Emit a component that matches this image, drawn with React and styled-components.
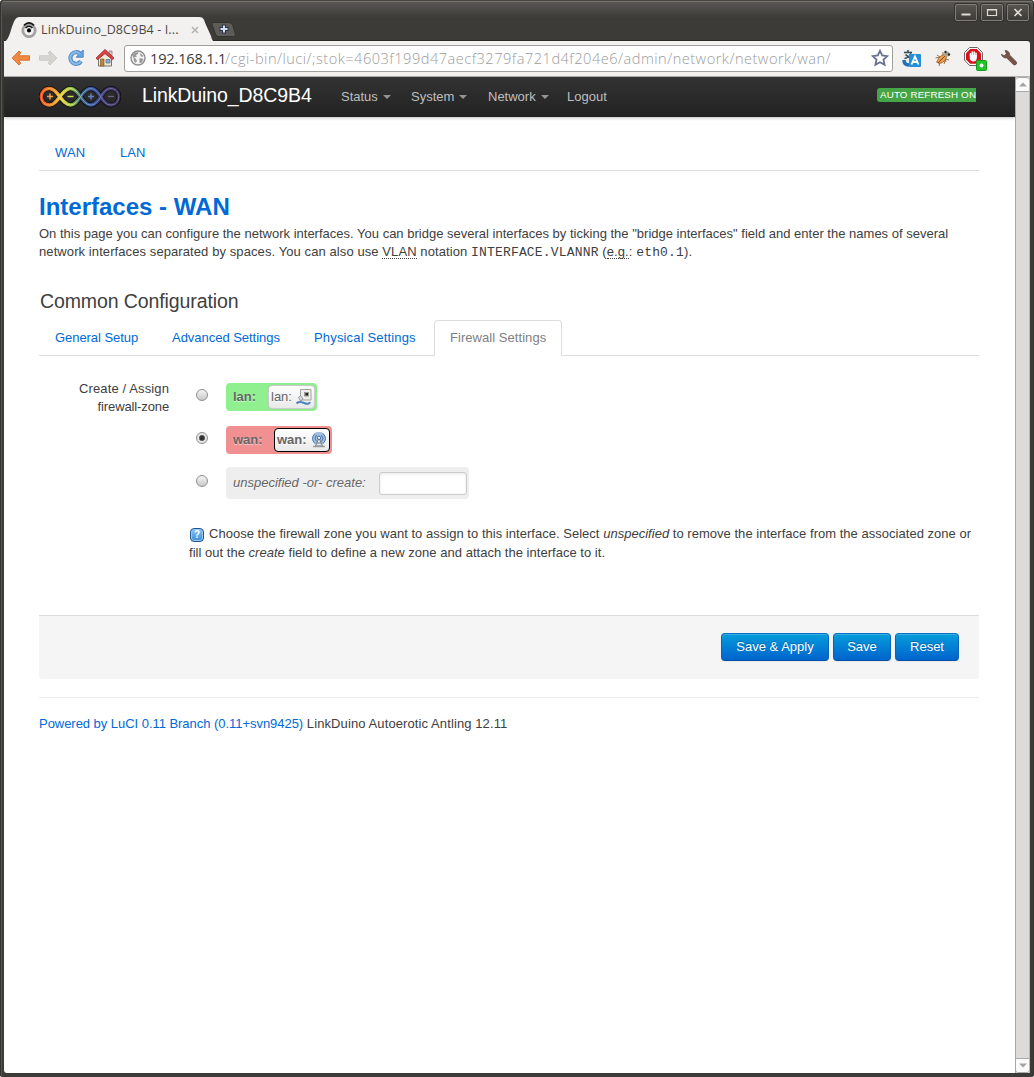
import React from "react";
import styled, { createGlobalStyle, css } from "styled-components";

const Global = createGlobalStyle`
  * { box-sizing: border-box; }
  html, body { margin: 0; padding: 0; background: #fff; }
  body { overflow: hidden; font: 13px/18px "Liberation Sans", Arial, sans-serif; color: #404040; }
  svg { display: block; flex: none; }
`;

const Window = styled.div`
  width: 1034px; height: 1077px; padding: 0 4px 4px;
  display: flex; flex-direction: column;
  background: linear-gradient(#5c5a56 0, #3c3b37 18px, #3c3b37 100%);
  border-radius: 4px 4px 3px 3px;
  box-shadow: inset 1px 0 #34332f, inset 2px 0 #56554f, inset -1px 0 #34332f, inset 0 1px #45443f, inset 0 2px #77756e;
`;
const TitleBar = styled.div`
  height: 41px; flex: none; display: flex; justify-content: space-between;
  border-bottom: 1px solid #2b2a27;
`;
const TabStrip = styled.div`display: flex; padding-top: 17px;`;
const BrowserTab = styled.div`
  width: 207px; height: 24px; display: grid; position: relative; z-index: 1;
  > * { grid-area: 1 / 1; }
`;
const TabInner = styled.div`
  display: flex; align-items: center; height: 25px; padding-left: 17px; z-index: 1;
`;
const TabTitle = styled.span`
  width: 154px; flex: none; padding-left: 4px; white-space: nowrap;
  font: 12.5px/24px "Open Sans", "Noto Sans", sans-serif; letter-spacing: 0.12px; color: #4b4a46;
`;
const WindowButtons = styled.div`display: flex; gap: 4px; padding: 4px 1px 0 0;`;
const WindowButton = styled.div`
  width: 22px; height: 17px; border: 1px solid #807e77; border-radius: 2px;
  background: linear-gradient(#56544f, #3d3c38); box-shadow: 0 0 0 1px #33322e;
  display: grid; place-items: center;
`;
const Toolbar = styled.div`
  height: 36px; flex: none; display: flex; align-items: center; padding: 0 0 1px 7px;
  background: #f2f1f0; border-bottom: 1px solid #b5b3b0; border-radius: 0 3px 0 0;
`;
const Tool = styled.div`width: ${p => p.$w}px; display: flex; justify-content: flex-start;`;
const Address = styled.div`
  width: 769px; height: 27px; margin-right: 9px; padding: 0 3px 0 5px;
  display: flex; align-items: center;
  border: 1px solid #a09f9c; border-radius: 3px; background: #fff;
  font: 14.6px/24px "Open Sans", "Noto Sans", sans-serif; color: #3c3c3c; white-space: nowrap;
`;
const UrlHost = styled.span`width: 75px; margin-left: 4px; letter-spacing: -0.18px;`;
const UrlPath = styled.span`flex: 1; color: #9b9b9b; font-weight: 300; letter-spacing: 0.49px;`;

const Viewport = styled.div`flex: 1; display: flex; background: #fff; min-height: 0; border-radius: 0 0 3px 3px;`;
const Page = styled.div`width: 1011px; display: flex; flex-direction: column;`;
const Scrollbar = styled.div`
  width: 15px; background: #dcdbda; border-left: 1px solid #aaa9a7; border-right: 1px solid #b8b7b5;
  display: flex; flex-direction: column; justify-content: space-between;
`;
const ScrollButton = styled.div`
  height: 15px; background: #fafafa; border: solid #aaa9a7; border-width: 1px 0;
  display: grid; place-items: center;
  border-radius: ${p => (p.$up ? "3px 3px 0 0" : "0 0 3px 3px")};
`;

const TopBar = styled.div`
  height: 40px; flex: none; display: flex; padding: 0 39px 0 35px;
  background: linear-gradient(#333, #222);
  box-shadow: 0 1px 3px rgba(0,0,0,.25), inset 0 -1px 0 rgba(0,0,0,.1);
`;
const Brand = styled.div`
  width: 220px; padding-left: 21px; font-size: 19.5px; line-height: 36px; color: #fff; letter-spacing: -0.1px;
`;
const Menu = styled.div`display: flex; flex: 1;`;
const MenuItem = styled.div`
  width: ${p => p.$w}px; display: flex; gap: 5px; align-items: center; line-height: 40px; color: #bfbfbf;
`;
const Caret = styled.i`
  width: 0; height: 0; border: 4px solid transparent; border-top-color: #949494; border-bottom: 0; margin-top: 0;
`;
const RefreshLabel = styled.span`
  width: 99px; height: 14px; margin-top: 11px; padding-left: 3px; overflow: hidden; white-space: nowrap;
  background: #46a546; border-radius: 3px 0 0 3px; color: #fff; font-size: 9.75px; line-height: 14px; letter-spacing: 0.17px;
`;

const Content = styled.div`width: 940px; margin-left: 35px; display: flex; flex-direction: column;`;
const Tabs = styled.div`
  display: flex; gap: 2px; height: 36px; margin-top: ${p => p.$top || 0}px; border-bottom: 1px solid #ddd;
`;
const Tab = styled.div`
  width: ${p => p.$w}px; height: 36px; padding-left: 15px; line-height: 34px; white-space: nowrap;
  border: 1px solid transparent; color: #0069d6; letter-spacing: ${p => p.$ls || 0}px;
  ${p => p.$active && css`
    color: #808080; background: #fff; border-color: #ddd #ddd #fff; border-radius: 4px 4px 0 0;
  `}
`;
const Heading = styled.h2`margin: 18px 0 0; font-size: 24px; line-height: 36px; color: #0069d6; letter-spacing: 0;`;
const Intro = styled.p`margin: 0; white-space: nowrap;`;
const Line = styled.span`display: block; letter-spacing: ${p => p.$ls}px;`;
const Abbr = styled.span`border-bottom: 1px dotted #404040; display: inline-block; height: 16px; line-height: 18px; vertical-align: top;`;
const Code = styled.code`font-family: "Liberation Mono", monospace; font-size: 13px; line-height: 1; letter-spacing: 0.17px;`;
const Legend = styled.h3`margin: 22px 0 0 1px; font-weight: 400; font-size: 19.5px; line-height: 36px; height: 37px; letter-spacing: -0.1px;`;

const FieldRow = styled.div`display: flex; margin-top: 24px;`;
const FieldLabel = styled.div`width: 130px; margin-right: 20px; display: flex; flex-direction: column; align-items: flex-end;`;
const FieldBody = styled.div`display: flex; flex-direction: column; flex: 1; padding-top: 3px;`;
const Option = styled.div`
  display: flex; align-items: flex-start; height: ${p => p.$h}px; margin-bottom: ${p => p.$gap}px;
`;
const Radio = styled.span`
  width: 12px; height: 12px; margin: ${p => p.$top}px 18px 0 7px; border: 1px solid #8f8f8f; border-radius: 50%;
  background: ${p => p.$checked
    ? "radial-gradient(circle, #333 0 2px, #777 2.8px, #e6e6e6 3.5px)"
    : "linear-gradient(#f4f4f4, #c9c9c9)"};
`;
const Zone = styled.div`
  width: ${p => p.$w}px; height: 100%; padding: 0 2px 0 7px; border-radius: 4px; background: ${p => p.$bg};
  display: flex; align-items: center; justify-content: space-between;
  color: #666; text-shadow: 0 1px 1px rgba(255,255,255,.6);
  font-weight: ${p => (p.$italic ? 400 : 700)}; font-style: ${p => (p.$italic ? "italic" : "normal")};
`;
const IfaceBadge = styled.span`
  width: ${p => p.$w}px; height: 24px; padding: 0 2px; border-radius: 4px; display: flex; align-items: center;
  justify-content: space-between; border: 1px solid ${p => (p.$active ? "#000" : "#ccc")};
  background: linear-gradient(#fff, #e9e9e9); font-weight: ${p => (p.$active ? 700 : 400)};
  box-shadow: ${p => (p.$active ? "none" : "0 0 1px #aaa")};
`;
const ZoneInput = styled.input`
  width: 88px; height: 23px; border: 1px solid #ccc; border-radius: 3px; padding: 0; background: #fff;
  margin-top: 1px; box-shadow: inset 0 1px 3px rgba(0,0,0,.1);
`;
const Help = styled.div`margin-top: 26px; white-space: nowrap;`;
const HelpLine = styled.div`display: flex; align-items: center; height: ${p => p.$h}px; letter-spacing: ${p => p.$ls}px;`;
const HelpBadge = styled.span`
  display: grid; place-items: center; width: 14px; height: 14px; margin: 1px 5px 0 1px; flex: none;
  border: 1px solid #205691; border-radius: 4px;
  background: linear-gradient(#8ac0f1, #3e8edb); box-shadow: inset 0 0 0 1px #9bcaf0;
  color: #fff; font-size: 10px; font-weight: 700; line-height: 12px;
`;

const Actions = styled.div`
  height: 64px; margin-top: 53px; padding: 17px 20px 0; display: flex; justify-content: flex-end; gap: 4px;
  background: #f5f5f5; border-top: 1px solid #ddd; border-radius: 0 0 3px 3px;
`;
const Button = styled.button`
  width: ${p => p.$w}px; height: 28px; padding: 0 0 1px; border: 1px solid; border-color: #0a6fc4 #0a63b8 #0050a8;
  border-radius: 4px; background: linear-gradient(#049cdb, #0064cd); color: #fff;
  font: 13px/18px "Liberation Sans", Arial, sans-serif; text-shadow: 0 -1px 0 rgba(0,0,0,.25);
  box-shadow: inset 0 1px 0 rgba(255,255,255,.2), 0 1px 2px rgba(0,0,0,.05);
`;
const Footer = styled.div`margin-top: 18px; padding-top: 17px; border-top: 1px solid #eee; letter-spacing: 0.1px;`;
const FootLink = styled.span`color: #0069d6; letter-spacing: -0.04px;`;

const TabShape = () => (
  <svg width="212" height="25" viewBox="0 0 212 25">
    <path d="M0 25C4 23 5 19 7 13C10 4 11 0 16 0H195C200 0 200 3 202 8L207 19C208 23 209 25 212 25Z" fill="#f2f1f0" />
  </svg>
);
const Favicon = () => (
  <svg width="16" height="16" viewBox="0 0 16 16">
    <circle cx="8" cy="8.5" r="6.2" fill="#f2f2f2" stroke="#a2a2a2" strokeWidth="2.8" />
    <path d="M3 3.4Q8-1.600 13 3.4M4.6 6Q8 2.500 11.4 6" fill="none" stroke="#151515" strokeWidth="1.7" />
    <circle cx="8" cy="8.4" r="2.1" fill="#000" />
  </svg>
);
const CloseTab = () => (
  <svg width="8" height="8" viewBox="0 0 8 8"><path d="M1 1L7 7M7 1L1 7" stroke="#b5b3b0" strokeWidth="1.5" /></svg>
);
const NewTab = () => (
  <svg width="26" height="24" viewBox="0 0 26 24">
    <path d="M2 5.5H18Q21 5.5 22 9L24.5 17.5Q25 19.5 22.5 19.5H7Q5 19.5 4 16L1 7Q.6 5.5 2 5.5Z" fill="#5d5c58" stroke="#33322f" />
    <path d="M13 7.500V16.500M8.500 12H17.500" stroke="#26364f" strokeWidth="4" />
    <path d="M13 8.500V15.500M9.500 12H16.500" stroke="#d5e0f2" strokeWidth="2" />
  </svg>
);
const Arrow = ({ fill, stroke, flip }) => (
  <svg width="20" height="16" viewBox="0 0 20 16">
    <path transform={flip ? "translate(20 0) scale(-1 1)" : undefined}
      d="M1.2 8L8 1L9.8 2.8L7.4 5.800H18.5V10.200H7.4L9.8 13.200L8 15Z" fill={fill} stroke={stroke} strokeLinejoin="round" />
  </svg>
);
const Reload = () => (
  <svg width="18" height="18" viewBox="0 0 18 18">
    <path d="M13.2 4.8A5.8 5.8 0 1 0 14 12.3" fill="none" stroke="#4d86c7" strokeWidth="4.2" />
    <path d="M16.2 1V8.2H9.2Z" fill="#69a5df" stroke="#4d86c7" />
    <path d="M13 4.8A5.8 5.8 0 1 0 14 12" fill="none" stroke="#82b9e9" strokeWidth="2.3" />
  </svg>
);
const Home = () => (
  <svg width="20" height="20" viewBox="0 0 20 20">
    <path d="M14 3H17V8L14 5Z" fill="#d0d0cc" stroke="#777" strokeWidth=".7" />
    <path d="M3.5 9L10 4L16.5 9V18H3.5Z" fill="#f1ead8" stroke="#777369" />
    <path d="M1 10.2L10 1.5L19 10.2L17.4 11.5L10 5.5L2.6 11.5Z" fill="#dc4544" stroke="#a92c31" strokeLinejoin="round" />
    <path d="M5.5 11H9V18H5.5Z" fill="#bb8735" stroke="#76521d" strokeWidth=".6" />
    <path d="M11 11.5H15V15H11Z" fill="#86abd8" stroke="#596f88" strokeWidth=".7" />
  </svg>
);
const Globe = () => (
  <svg width="16" height="16" viewBox="0 0 16 16">
    <circle cx="8" cy="8" r="7" fill="#f4f4f4" stroke="#8d8d8d" strokeWidth="1.4" />
    <path d="M2 5L5 2.5L8.5 2.2L8 4L6 5L6.8 7L4 7L6 9L7 11L5.5 13L4 11L3.5 8ZM10 3L13.5 6L12 7L10.5 6ZM9.5 8L13.5 9L11.5 13L9.5 13Z" fill="#999" />
  </svg>
);
const Star = () => (
  <svg width="18" height="18" viewBox="0 0 18 18">
    <path d="M9 1.8L11.2 6.5L16.4 7.1L12.5 10.6L13.6 15.8L9 13.2L4.4 15.8L5.5 10.6L1.6 7.1L6.8 6.5Z" fill="#fff" stroke="#66718d" strokeWidth="1.8" />
  </svg>
);
const Translate = () => (
  <svg width="19" height="19" viewBox="0 0 19 19">
    <path d="M1 1H11V17H5Q1 17 1 12Z" fill="#e7eee9" />
    <path d="M2 3.500H10M6 1V3.500M9 4.500Q7 8.500 2.5 9.500M3.5 5.500Q6 8.500 10 9" stroke="#33485a" strokeWidth="1.5" fill="none" />
    <path d="M2 11Q2 16 7 16" fill="none" stroke="#1f70ba" strokeWidth="3.500" />
    <rect x="7" y="5" width="12" height="13" rx="1" fill="#268fdd" />
    <path d="M9.5 15.500L13 7.5L16.5 15.500M10.8 13H15.2" stroke="#fff" strokeWidth="1.8" fill="none" />
  </svg>
);
const Bug = () => (
  <svg width="18" height="18" viewBox="0 0 18 18">
    <path d="M3 6L6 8L1.5 9M9 3L9 7M5 17L6 13L2 13M10 15L11 12M12 13L11 10L15 11" stroke="#a06e40" strokeWidth="1" fill="none" />
    <ellipse cx="8" cy="10" rx="5.600" ry="3" transform="rotate(-43 8 10)" fill="#ec9d4e" stroke="#996031" strokeWidth=".8" />
    <path d="M4 14L11 7" stroke="#77431b" strokeWidth=".9" />
    <circle cx="12.8" cy="5" r="2.6" fill="#aaa797" /><circle cx="11.5" cy="3" r="1.2" fill="#292b2d" /><circle cx="15" cy="5.5" r="1.2" fill="#292b2d" />
  </svg>
);
const AdBlock = () => (
  <svg width="25" height="25" viewBox="0 0 25 25">
    <path d="M6.5 1.5H14.5L19.5 6.5V14L14.5 19.5H6.5L1.5 14V6.5Z" fill="#fff" stroke="#666" />
    <path d="M7.2 3H13.8L18 7.2V13.6L13.8 17.8H7.2L3 13.6V7.2Z" fill="#d9111b" />
    <path d="M7.500 10V7.500M9.300 10V6M11.200 10V6M13 11V7.300" fill="none" stroke="#fff" strokeWidth="1.500" strokeLinecap="round" />
    <path d="M6.800 9H13.700V13Q13 15.500 10.500 15.500Q8 15.500 6.800 13Z" fill="#fff" />
    <rect x="13.5" y="14.5" width="10" height="10" rx="1" fill="#20c52a" stroke="#159d1e" /><circle cx="18.5" cy="19.5" r="1.9" fill="#fff" />
  </svg>
);
const Wrench = () => (
  <svg width="18" height="18" viewBox="0 0 18 18">
    <path d="M5 1.5Q9.5 1.5 9.6 6L16 12.4Q17.5 14 16 15.4Q14.5 16.7 13 15.2L6.8 9Q2.5 9.3 1.3 5.2L4.2 6.8L6.3 4.7Z" fill="#765348" stroke="#654238" strokeWidth=".7" />
  </svg>
);
const Logo = () => (
  <svg width="82" height="40" viewBox="0 0 82 40">
    <defs>
      <linearGradient id="spectrum" gradientUnits="userSpaceOnUse" x1="0" y1="0" x2="82" y2="0">
        <stop offset="0" stopColor="#e5431f" /><stop offset=".17" stopColor="#f08a20" /><stop offset=".27" stopColor="#ead338" />
        <stop offset=".41" stopColor="#86bd40" /><stop offset=".51" stopColor="#315f82" /><stop offset=".66" stopColor="#3855a4" />
        <stop offset=".78" stopColor="#433d73" /><stop offset="1" stopColor="#35294c" />
      </linearGradient>
      <linearGradient id="shine" gradientUnits="userSpaceOnUse" x1="0" y1="0" x2="82" y2="0">
        <stop offset="0" stopColor="#ff9c58" /><stop offset=".4" stopColor="#e8ee93" /><stop offset=".65" stopColor="#7291cf" /><stop offset="1" stopColor="#817295" />
      </linearGradient>
      <path id="braid" d="M10.5 11.5C19 11.5 22.500 28 31.5 28C40.500 28 42.500 11.5 52 11.5C61 11.5 62.500 28 71.5 28C82.500 28 82.500 11.5 71.5 11.5C62.500 11.5 61 28 52 28C42.500 28 40.500 11.5 31.5 11.5C22.500 11.5 19 28 10.5 28C-.5 28-.5 11.5 10.5 11.5Z" />
    </defs>
    <g fill="none"><use href="#braid" stroke="#0d0d0d" strokeWidth="5" /><use href="#braid" stroke="url(#spectrum)" strokeWidth="3.400" /><use href="#braid" stroke="url(#shine)" strokeWidth=".8" /></g>
    <path d="M8 19.5H14M11 16.5V22.5" stroke="#f3a14b" strokeWidth="1.5" /><path d="M28.5 19.5H34.5" stroke="#c5dc55" strokeWidth="1.5" />
    <path d="M49 19.5H55M52 16.5V22.5" stroke="#6681c0" strokeWidth="1.5" /><path d="M69 19.5H75" stroke="#6d6084" strokeWidth="1.3" />
  </svg>
);
const Ethernet = () => (
  <svg width="16" height="16" viewBox="0 0 16 16">
    <path d="M4.5 .5H15V11H4.5Z" fill="#eeeee9" stroke="#a2a29f" /><path d="M8 3H13V7.5H8Z" fill="#9a9b93" /><path d="M9.5 4H12V6.5H9.5Z" fill="#26291d" />
    <path d="M.5 14.500Q3 12 8 14T14 13" fill="none" stroke="#4e83c0" strokeWidth="2" /><path d="M2.500 8.500L4.500 6.500L7 10L4.500 12Z" fill="#d8dadd" stroke="#777" strokeWidth=".7" />
  </svg>
);
const Antenna = () => (
  <svg width="16" height="16" viewBox="0 0 16 16">
    <circle cx="8" cy="6.5" r="6.8" fill="#a3bfe1" /><path d="M4 1.5Q-1 6.5 4 11.5M12 1.5Q17 6.5 12 11.5M5.5 3Q2.5 6.5 5.5 9.5M10.5 3Q13.5 6.5 10.5 9.5" fill="none" stroke="#4a7ab4" strokeWidth="1" />
    <path d="M8 6L4.5 14H11.5ZM5.8 11H10.2" fill="#dde4ec" stroke="#747c87" /><circle cx="8" cy="5.8" r="1.7" fill="#f2f7ff" stroke="#416b9d" /><path d="M2 14.5H14" stroke="#9b9c98" strokeWidth="1.5" />
  </svg>
);
const ScrollArrow = ({ up }) => (
  <svg width="8" height="5" viewBox="0 0 8 5"><path d={up ? "M0 4.5L4 .5L8 4.5Z" : "M0 .5L4 4.5L8 .5Z"} fill="#a5a39f" /></svg>
);
const ControlGlyph = ({ kind }) => (
  <svg width="12" height="11" viewBox="0 0 12 11" fill="none" stroke="#dfdbd2">
    {kind === "min" && <path d="M1.5 7.5H10.5" strokeWidth="2" />}
    {kind === "max" && <path d="M1.5 2.5H10.5V8.5H1.5ZM1.5 3H10.5" strokeWidth="1.2" />}
    {kind === "close" && <path d="M2.5 2L9.5 9M9.5 2L2.5 9" strokeWidth="1.6" />}
  </svg>
);

export default function App() {
  return (
    <>
      <Global />
      <Window>
        <TitleBar>
          <TabStrip>
            <BrowserTab>
              <TabShape />
              <TabInner><Favicon /><TabTitle>LinkDuino_D8C9B4 - I...</TabTitle><CloseTab /></TabInner>
            </BrowserTab>
            <NewTab />
          </TabStrip>
          <WindowButtons>
            {["min", "max", "close"].map(kind => <WindowButton key={kind}><ControlGlyph kind={kind} /></WindowButton>)}
          </WindowButtons>
        </TitleBar>
        <Toolbar>
          <Tool $w={27}><Arrow fill="#f18a43" stroke="#d47336" /></Tool>
          <Tool $w={29}><Arrow flip fill="#d7d5d2" stroke="#cbc9c6" /></Tool>
          <Tool $w={28}><Reload /></Tool>
          <Tool $w={29}><Home /></Tool>
          <Address>
            <Globe /><UrlHost>192.168.1.1</UrlHost>
            <UrlPath>/cgi-bin/luci/;stok=4603f199d47aecf3279fa721d4f204e6/admin/network/network/wan/</UrlPath>
            <Star />
          </Address>
          <Tool $w={32}><Translate /></Tool>
          <Tool $w={29}><Bug /></Tool>
          <Tool $w={37}><AdBlock /></Tool>
          <Tool $w={20}><Wrench /></Tool>
        </Toolbar>
        <Viewport>
          <Page>
            <TopBar>
              <Logo />
              <Brand>LinkDuino_D8C9B4</Brand>
              <Menu>
                <MenuItem $w={70}>Status <Caret /></MenuItem>
                <MenuItem $w={77}>System <Caret /></MenuItem>
                <MenuItem $w={79}>Network <Caret /></MenuItem>
                <MenuItem $w={50}>Logout</MenuItem>
              </Menu>
              <RefreshLabel>AUTO REFRESH ON</RefreshLabel>
            </TopBar>
            <Content>
              <Tabs $top={18}>
                <Tab $w={63} $ls={0.2}>WAN</Tab>
                <Tab $w={63}>LAN</Tab>
              </Tabs>
              <Heading>Interfaces - WAN</Heading>
              <Intro>
                <Line $ls={0.006}>On this page you can configure the network interfaces. You can bridge several interfaces by ticking the "bridge interfaces" field and enter the names of several</Line>
                <Line $ls={0.09}>network interfaces separated by spaces. You can also use <Abbr>VLAN</Abbr> notation <Code>INTERFACE.VLANNR</Code> (<Abbr>e.g.</Abbr>: <Code>eth0.1</Code>).</Line>
              </Intro>
              <Legend>Common Configuration</Legend>
              <Tabs>
                <Tab $w={115} $ls={-0.06}>General Setup</Tab>
                <Tab $w={140} $ls={-0.03}>Advanced Settings</Tab>
                <Tab $w={134} $ls={0.16}>Physical Settings</Tab>
                <Tab $w={128} $ls={0.05} $active>Firewall Settings</Tab>
              </Tabs>
              <FieldRow>
                <FieldLabel><Line $ls={0.12}>Create / Assign</Line><Line $ls={-0.12}>firewall-zone</Line></FieldLabel>
                <FieldBody>
                  <Option $h={28} $gap={15}>
                    <Radio $top={6} />
                    <Zone $w={91} $bg="#90f090">lan:<IfaceBadge $w={47}>lan:<Ethernet /></IfaceBadge></Zone>
                  </Option>
                  <Option $h={28} $gap={13}>
                    <Radio $top={6} $checked />
                    <Zone $w={106} $bg="#f09090">wan:<IfaceBadge $w={56} $active>wan:<Antenna /></IfaceBadge></Zone>
                  </Option>
                  <Option $h={32} $gap={0}>
                    <Radio $top={8} />
                    <Zone $w={243} $bg="#eeeeee" $italic>unspecified -or- create:<ZoneInput aria-label="create" /></Zone>
                  </Option>
                  <Help>
                    <HelpLine $h={18} $ls={0.025}>
                      <HelpBadge>?</HelpBadge>
                      <span>Choose the firewall zone you want to assign to this interface. Select <em>unspecified</em> to remove the interface from the associated zone or</span>
                    </HelpLine>
                    <HelpLine $h={19} $ls={0.025}>
                      <span>fill out the <em>create</em> field to define a new zone and attach the interface to it.</span>
                    </HelpLine>
                  </Help>
                </FieldBody>
              </FieldRow>
              <Actions>
                <Button $w={108}>Save &amp; Apply</Button>
                <Button $w={58}>Save</Button>
                <Button $w={64}>Reset</Button>
              </Actions>
              <Footer><FootLink>Powered by LuCI 0.11 Branch (0.11+svn9425)</FootLink> LinkDuino Autoerotic Antling 12.11</Footer>
            </Content>
          </Page>
          <Scrollbar>
            <ScrollButton $up><ScrollArrow up /></ScrollButton>
            <ScrollButton><ScrollArrow /></ScrollButton>
          </Scrollbar>
        </Viewport>
      </Window>
    </>
  );
}
